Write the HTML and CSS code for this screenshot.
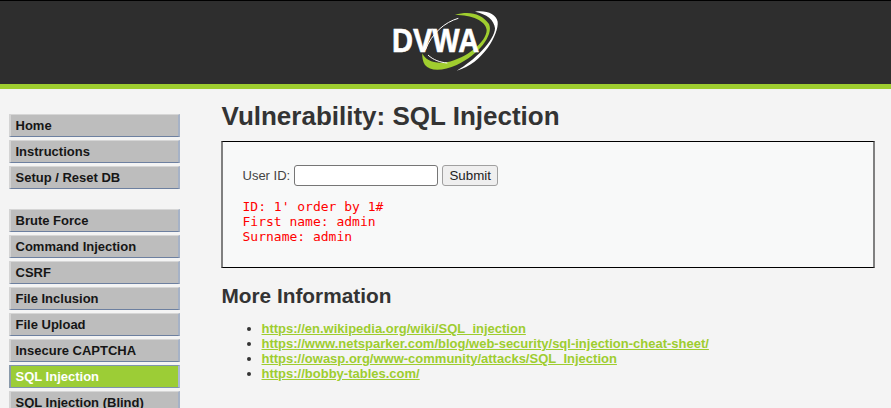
FILE: index.html
```html
<!DOCTYPE html>
<html lang="en">
<head>
<meta charset="utf-8">
<title>Vulnerability: SQL Injection</title>
<link rel="stylesheet" href="styles.css">
</head>
<body>
<header class="header">
  <div class="logo">
    <svg class="logo-swoosh" width="110" height="65" viewBox="150 24 330 195" aria-hidden="true">
      <path class="sw-white" d="M405 35 C440 30 468 42 473 65 C477 100 430 190 350 212 C400 185 465 120 465 85 C463 60 440 42 405 35Z"/>
      <path class="sw-green" d="M345 45 C385 32 425 40 447 72 C462 105 415 165 350 195 C310 213 270 215 255 195 C248 185 246 170 247 160 C255 180 280 192 320 187 C380 175 440 125 440 90 C438 62 395 45 345 45Z"/>
      <path class="sw-line" d="M355 55 C315 66 275 100 256 150"/>
      <path class="sw-line" d="M264 165 C280 180 300 187 322 189"/>
    </svg>
    <span class="logo-text">DVWA</span>
  </div>
</header>
<div class="bar"></div>
<div class="page">
  <nav class="menu">
    <ul class="menu-group">
      <li><a href="#">Home</a></li>
      <li><a href="#">Instructions</a></li>
      <li><a href="#">Setup / Reset DB</a></li>
    </ul>
    <ul class="menu-group">
      <li><a href="#">Brute Force</a></li>
      <li><a href="#">Command Injection</a></li>
      <li><a href="#">CSRF</a></li>
      <li><a href="#">File Inclusion</a></li>
      <li><a href="#">File Upload</a></li>
      <li><a href="#">Insecure CAPTCHA</a></li>
      <li class="selected"><a href="#">SQL Injection</a></li>
      <li><a href="#">SQL Injection (Blind)</a></li>
    </ul>
  </nav>
  <main class="content">
    <h1>Vulnerability: SQL Injection</h1>
    <div class="vulnerable">
      <form class="form" onsubmit="return false">
        <label for="uid">User ID:</label>
        <input id="uid" class="field" type="text">
        <input class="submit" type="submit" value="Submit">
      </form>
      <pre class="result">ID: 1' order by 1#
First name: admin
Surname: admin</pre>
    </div>
    <h2>More Information</h2>
    <ul class="links">
      <li><a href="#">https://en.wikipedia.org/wiki/SQL_injection</a></li>
      <li><a href="#">https://www.netsparker.com/blog/web-security/sql-injection-cheat-sheet/</a></li>
      <li><a href="#">https://owasp.org/www-community/attacks/SQL_Injection</a></li>
      <li><a href="#">https://bobby-tables.com/</a></li>
    </ul>
  </main>
</div>
</body>
</html>
```

FILE: styles.css
```css
html, body {
  margin: 0;
  height: 100%;
  overflow: hidden;
}
body {
  background: #f4f4f4;
  color: #333;
  font-family: "Liberation Sans", Arial, sans-serif;
  font-size: 13px;
}
.header {
  height: 83px;
  background: #2e2e2e;
  border-top: 1px solid #000;
  display: flex;
  justify-content: center;
}
.logo {
  position: relative;
  width: 111px;
  height: 83px;
}
.logo-swoosh {
  position: absolute;
  left: 0;
  top: 7px;
}
.sw-white { fill: #fff; }
.sw-green { fill: #a0ce2f; }
.sw-line {
  fill: none;
  stroke: #fff;
  stroke-width: 3;
}
.logo-text {
  position: absolute;
  left: 2px;
  top: 21px;
  font-size: 33px;
  line-height: 37px;
  font-weight: 700;
  color: #fff;
  -webkit-text-stroke: 0.6px #fff;
  transform: scaleX(0.88);
  transform-origin: left center;
}
.bar {
  height: 5px;
  background: #9ecd2f;
}
.page {
  display: flex;
  align-items: flex-start;
}
.menu {
  width: 171px;
  margin: 25px 0 0 9px;
  flex: none;
}
.menu-group {
  list-style: none;
  margin: 0 0 20px;
  padding: 0;
  display: flex;
  flex-direction: column;
  gap: 3px;
}
.menu-group a {
  display: block;
  height: 20px;
  line-height: 20px;
  padding: 1px 0 0 4.5px;
  background: #bdbdbd;
  border-style: solid;
  border-width: 1px 2px;
  border-color: #d6d6d6 #a6b2c6 #6d80a0 #d4d4d4;
  color: #161616;
  font-weight: 700;
  text-decoration: none;
}
.selected a {
  background: #9ccd36;
  color: #fff;
  border-color: #8094ac #a9b8d4 #7f94ad #8a9aaa;
}
.content {
  margin-left: 41.5px;
  width: 653px;
  flex: none;
}
h1 {
  margin: 12px 0 0;
  font-size: 26px;
  line-height: 30px;
  font-weight: 700;
  color: #333;
}
.vulnerable {
  box-sizing: border-box;
  width: 654px;
  height: 127px;
  margin: 10px 0 0 -0.5px;
  padding: 23px 19px 0 19.5px;
  background: #f8f9f9;
  border-style: solid;
  border-width: 1px 2px;
  border-color: #000 #808080;
}
.form {
  display: flex;
  align-items: center;
  gap: 4px;
  color: #444;
  font-size: 13px;
}
.field {
  box-sizing: border-box;
  width: 144px;
  height: 21px;
  margin: 0;
  padding: 1px 2px;
  background: #fff;
  border: 1px solid #767676;
  border-radius: 3px;
}
.submit {
  box-sizing: border-box;
  height: 21px;
  width: 56px;
  margin: 0;
  padding: 0;
  background: #efefef;
  border: 1px solid #a0a0a0;
  border-radius: 3px;
  color: #222;
  font-family: "Liberation Sans", Arial, sans-serif;
  font-size: 13.33px;
}
.result {
  margin: 13px 0 0;
  color: #f00;
  font-family: "DejaVu Sans Mono", monospace;
  font-size: 13px;
  line-height: 15px;
}
h2 {
  margin: 16px 0 0;
  font-size: 20.8px;
  line-height: 23px;
  font-weight: 700;
  color: #333;
}
.links {
  margin: 14px 0 0;
  padding: 0 0 0 40px;
  font-size: 13px;
  line-height: 15px;
}
.links a {
  color: #9ecd2f;
  font-weight: 700;
}
```
